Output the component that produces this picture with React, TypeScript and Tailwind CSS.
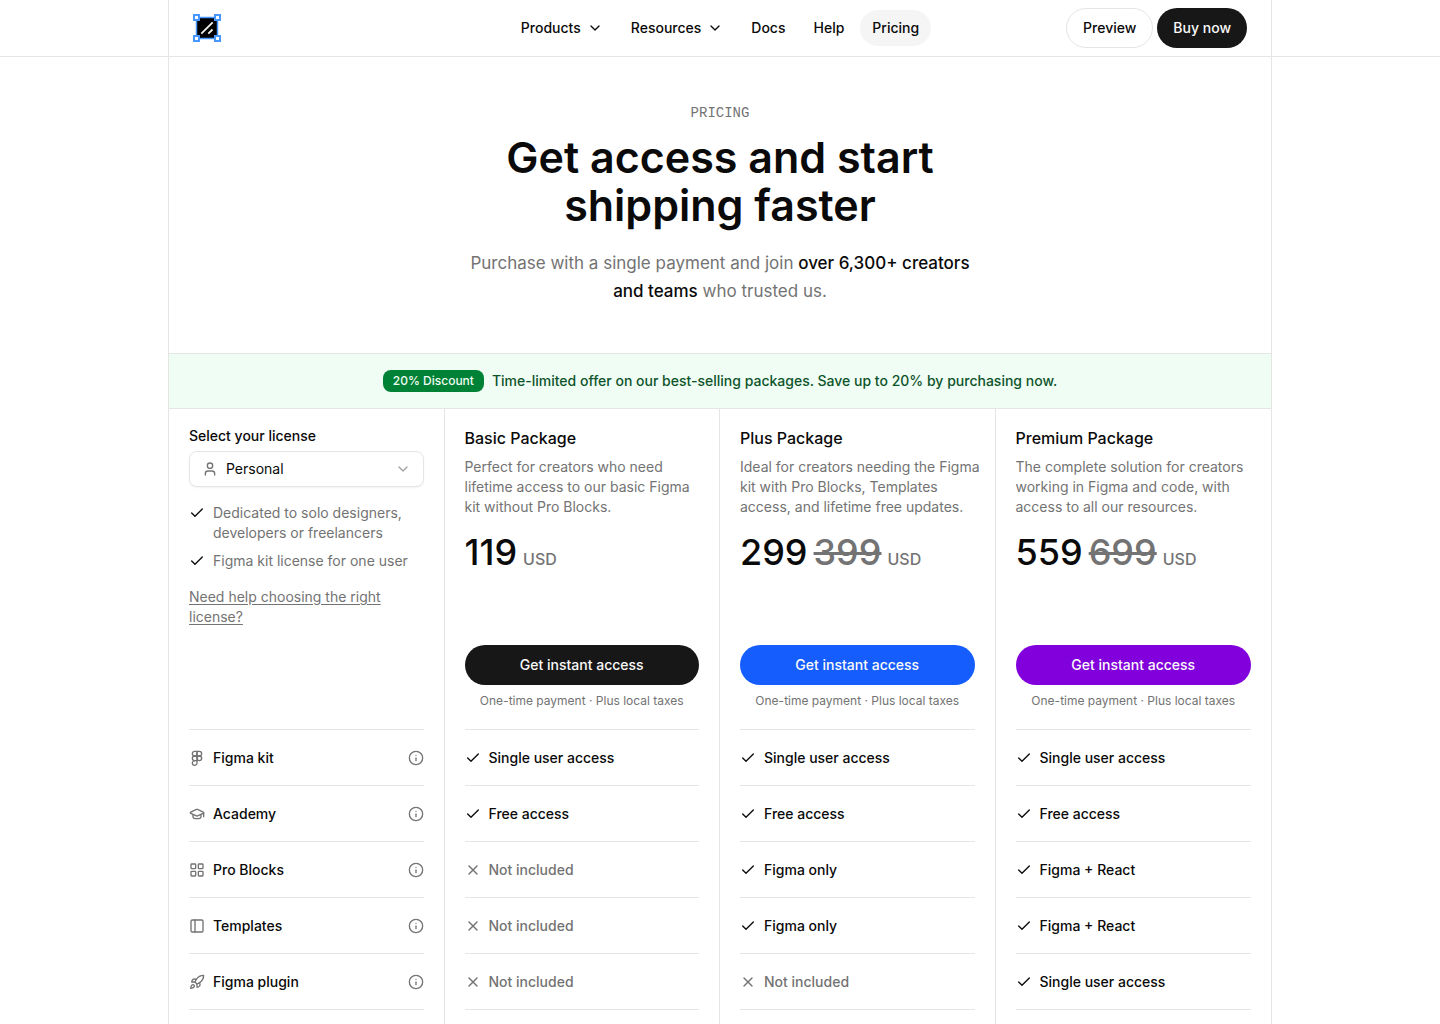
import { useState } from 'react'
import {
  Check, ChevronDown, Figma, GraduationCap, Info, LayoutGrid, PanelLeft, Rocket, User, X,
} from 'lucide-react'
import type { LucideIcon } from 'lucide-react'

// ─── Data ───────────────────────────────────────────────────

interface NavItem {
  label: string
  hasMenu?: boolean
  active?: boolean
}

const NAV_ITEMS: NavItem[] = [
  { label: 'Products', hasMenu: true },
  { label: 'Resources', hasMenu: true },
  { label: 'Docs' },
  { label: 'Help' },
  { label: 'Pricing', active: true },
]

interface Package {
  name: string
  description: string
  price: number
  oldPrice?: number
  button: string
}

const PACKAGES: Package[] = [
  {
    name: 'Basic Package',
    description: 'Perfect for creators who need lifetime access to our basic Figma kit without Pro Blocks.',
    price: 119,
    button: 'bg-neutral-900',
  },
  {
    name: 'Plus Package',
    description: 'Ideal for creators needing the Figma kit with Pro Blocks, Templates access, and lifetime free updates.',
    price: 299,
    oldPrice: 399,
    button: 'bg-blue-600',
  },
  {
    name: 'Premium Package',
    description: 'The complete solution for creators working in Figma and code, with access to all our resources.',
    price: 559,
    oldPrice: 699,
    button: 'bg-purple-700',
  },
]

// null means the feature is not part of the package
const FEATURES: Array<{ name: string; icon: LucideIcon; values: Array<string | null> }> = [
  { name: 'Figma kit', icon: Figma, values: ['Single user access', 'Single user access', 'Single user access'] },
  { name: 'Academy', icon: GraduationCap, values: ['Free access', 'Free access', 'Free access'] },
  { name: 'Pro Blocks', icon: LayoutGrid, values: [null, 'Figma only', 'Figma + React'] },
  { name: 'Templates', icon: PanelLeft, values: [null, 'Figma only', 'Figma + React'] },
  { name: 'Figma plugin', icon: Rocket, values: [null, null, 'Single user access'] },
]

const LICENSE_POINTS = [
  'Dedicated to solo designers, developers or freelancers',
  'Figma kit license for one user',
]

// ─── Page ───────────────────────────────────────────────────

export default function App() {
  return (
    <div className="flex min-h-screen flex-col bg-white font-['Inter',sans-serif] text-neutral-950">
      <Header />
      <main className="mx-auto w-full max-w-[1104px] flex-1 border-x border-neutral-200">
        <Hero />
        <div className="flex items-center justify-center gap-2 border-y border-neutral-200 bg-green-50 px-5 py-4">
          <span className="rounded-lg bg-green-700 px-2.5 py-0.5 text-xs leading-[18px] font-medium text-green-50">
            20% Discount
          </span>
          <p className="text-sm font-medium text-green-900">
            Time-limited offer on our best-selling packages. Save up to 20% by purchasing now.
          </p>
        </div>
        <PricingTable />
      </main>
    </div>
  )
}

function Header() {
  return (
    <header className="border-b border-neutral-200">
      <div className="mx-auto grid h-14 max-w-[1104px] grid-cols-[1fr_auto_1fr] items-center border-x border-neutral-200 px-6">
        <a href="#" aria-label="Home" className="justify-self-start">
          <Logo />
        </a>
        <nav className="flex items-center gap-1 text-sm font-medium">
          {NAV_ITEMS.map((item) =>
            item.hasMenu ? (
              <button key={item.label} className="flex h-9 items-center gap-1.5 rounded-full px-3">
                {item.label}
                <ChevronDown size={16} />
              </button>
            ) : (
              <a
                key={item.label}
                href="#"
                className={`flex h-9 items-center rounded-full px-3 ${item.active ? 'bg-neutral-100' : ''}`}
              >
                {item.label}
              </a>
            ),
          )}
        </nav>
        <div className="flex items-center gap-1 justify-self-end text-sm font-medium">
          <a href="#" className="flex h-10 items-center rounded-full border border-neutral-200 px-4">
            Preview
          </a>
          <a href="#" className="flex h-10 items-center rounded-full bg-neutral-900 px-4 text-neutral-50">
            Buy now
          </a>
        </div>
      </div>
    </header>
  )
}

function Hero() {
  return (
    <section className="flex flex-col items-center px-6 py-12 text-center">
      <p className="font-['Liberation_Mono',monospace] text-sm leading-4 text-neutral-500 uppercase">Pricing</p>
      <h1 className="mt-3 max-w-lg text-[43px] leading-12 font-semibold">Get access and start shipping faster</h1>
      <p className="mt-5 max-w-lg text-[17px] leading-7 text-neutral-500">
        Purchase with a single payment and join{' '}
        <span className="font-medium text-neutral-950">over 6,300+ creators and teams</span> who trusted us.
      </p>
    </section>
  )
}

// ─── Pricing table ──────────────────────────────────────────

function PricingTable() {
  return (
    <table className="w-full table-fixed border-separate border-spacing-0 text-left text-sm">
      <thead>
        <tr>
          <td className="border-r border-neutral-200 p-5 align-top">
            <LicensePicker />
          </td>
          {PACKAGES.map((pkg) => (
            <th key={pkg.name} scope="col" className="border-r border-neutral-200 p-5 align-top font-normal last:border-r-0">
              <PackageHeader pkg={pkg} />
            </th>
          ))}
        </tr>
      </thead>
      <tbody>
        {FEATURES.map(({ name, icon: Icon, values }) => (
          <tr key={name}>
            <th scope="row" className="border-r border-neutral-200 px-5 font-medium">
              <div className="flex h-14 items-center gap-2 border-t border-neutral-200">
                <Icon size={16} className="text-neutral-500" />
                <span className="flex-1">{name}</span>
                <button aria-label={`About ${name}`} className="text-neutral-500">
                  <Info size={16} />
                </button>
              </div>
            </th>
            {values.map((value, i) => (
              <td key={PACKAGES[i].name} className="border-r border-neutral-200 px-5 font-medium last:border-r-0">
                <FeatureValue value={value} />
              </td>
            ))}
          </tr>
        ))}
      </tbody>
      <tfoot>
        <tr>
          {[0, 1, 2, 3].map((i) => (
            <td key={i} className="border-r border-neutral-200 px-5 last:border-r-0">
              <div className="h-[15px] border-t border-neutral-200" />
            </td>
          ))}
        </tr>
      </tfoot>
    </table>
  )
}

function FeatureValue({ value }: { value: string | null }) {
  return (
    <div className={`flex h-14 items-center gap-2 border-t border-neutral-200 ${value ? '' : 'text-neutral-500'}`}>
      {value ? <Check size={16} /> : <X size={16} />}
      {value ?? 'Not included'}
    </div>
  )
}

function PackageHeader({ pkg }: { pkg: Package }) {
  return (
    <div className="flex min-h-70 flex-col">
      <h2 className="text-base leading-[18px] font-medium">{pkg.name}</h2>
      <p className="-mr-2 mt-2.5 text-neutral-500">{pkg.description}</p>
      <p className="mt-4 flex items-baseline gap-1.5 text-4xl leading-[38px] font-medium">
        <span>{pkg.price}</span>
        {pkg.oldPrice && <s className="text-neutral-500">{pkg.oldPrice}</s>}
        <span className="text-base leading-none text-neutral-500">USD</span>
      </p>
      <button className={`mt-auto h-10 rounded-full text-sm font-medium text-neutral-50 ${pkg.button}`}>
        Get instant access
      </button>
      <p className="mt-2 text-center text-xs text-neutral-500">One-time payment · Plus local taxes</p>
    </div>
  )
}

function LicensePicker() {
  const [license, setLicense] = useState('Personal')

  return (
    <div>
      <label htmlFor="license" className="block leading-[14px] font-medium">
        Select your license
      </label>
      <div className="relative mt-2">
        <User size={16} className="pointer-events-none absolute inset-y-0 left-[13px] my-auto text-neutral-500" />
        <select
          id="license"
          value={license}
          onChange={(e) => setLicense(e.target.value)}
          className="h-9 w-full appearance-none rounded-lg border border-neutral-200 bg-white px-9 text-sm shadow-xs"
        >
          <option>Personal</option>
        </select>
        <ChevronDown size={16} className="pointer-events-none absolute inset-y-0 right-[13px] my-auto text-neutral-400" />
      </div>
      <ul className="mt-4 space-y-2 text-neutral-500">
        {LICENSE_POINTS.map((point) => (
          <li key={point} className="flex gap-2">
            <Check size={16} className="mt-0.5 shrink-0 text-neutral-950" />
            {point}
          </li>
        ))}
      </ul>
      <a href="#" className="mt-4 block text-neutral-500 underline underline-offset-2">
        Need help choosing the right license?
      </a>
    </div>
  )
}

// ─── Logo ───────────────────────────────────────────────────

function Logo() {
  return (
    <svg width="28" height="28" viewBox="0 0 28 28" fill="none">
      <rect x="3.5" y="3.5" width="21" height="21" fill="#000" stroke="#4797FF" strokeWidth="1.5" />
      <path d="M8.3 19.7 19.7 8.3M15.3 19.7l4.2-4.2" stroke="#F0F0EA" strokeWidth="1.8" />
      <g fill="#fff" stroke="#4797FF" strokeWidth="2">
        <rect x="1" y="1" width="5" height="5" />
        <rect x="22" y="1" width="5" height="5" />
        <rect x="1" y="22" width="5" height="5" />
        <rect x="22" y="22" width="5" height="5" />
      </g>
    </svg>
  )
}
